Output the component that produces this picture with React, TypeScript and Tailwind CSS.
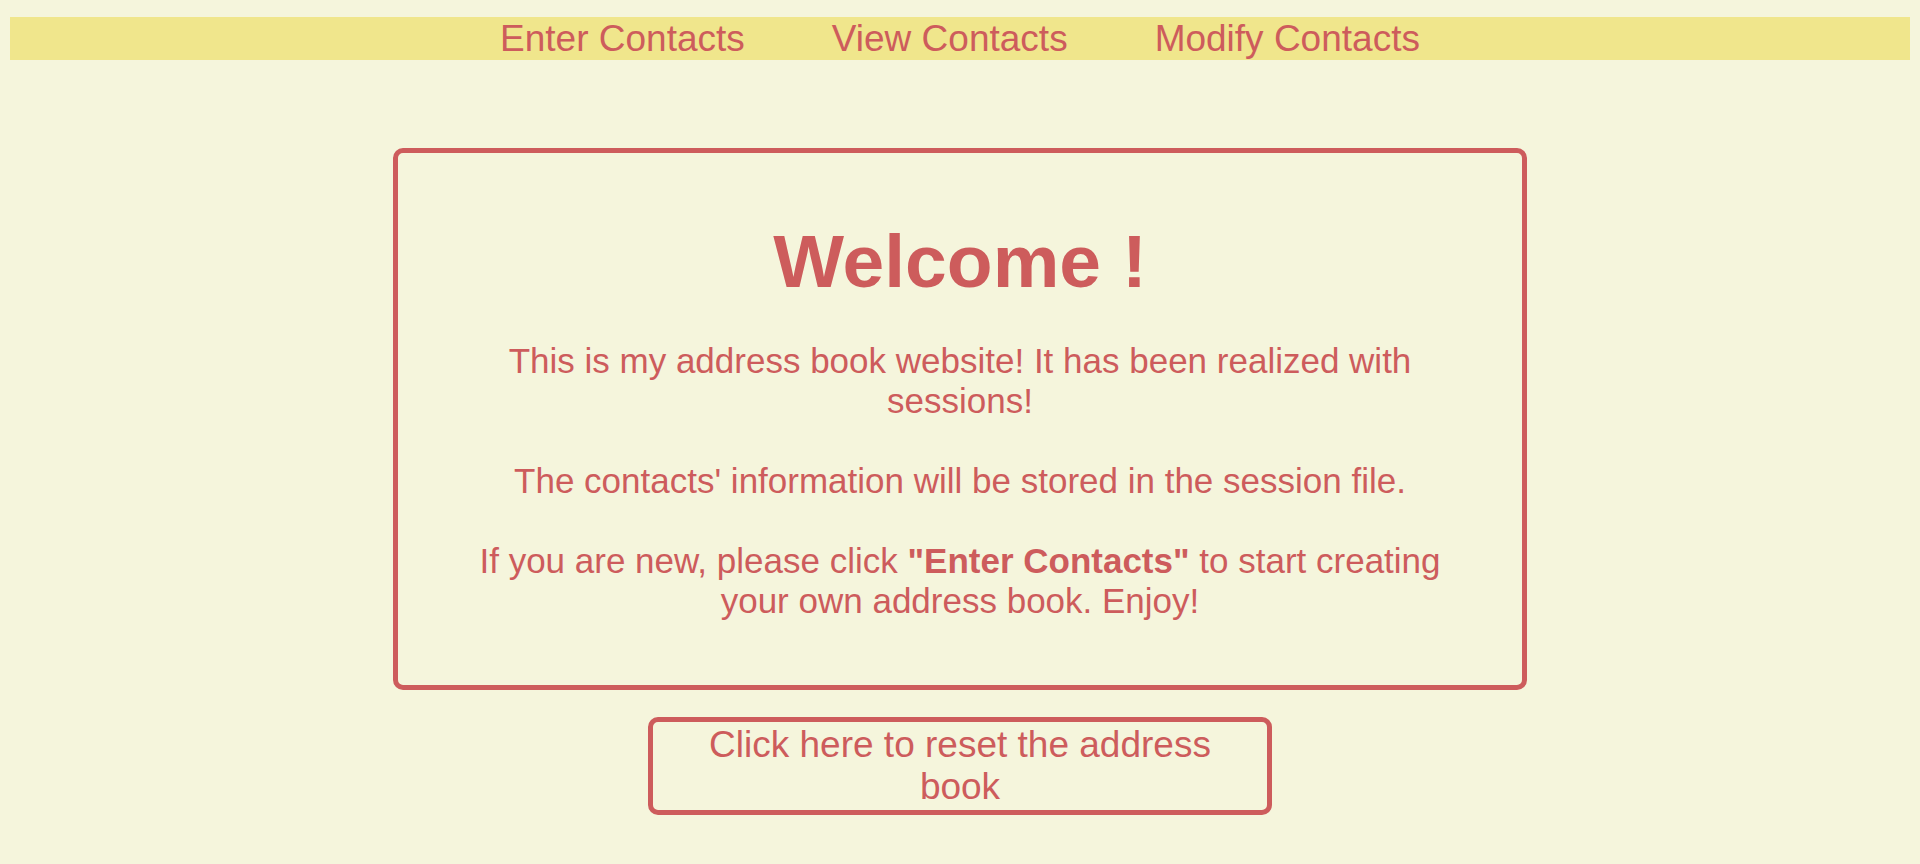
import React from 'react';

const links = ['Enter Contacts', 'View Contacts', 'Modify Contacts'];

export default function App() {
  return (
    <div className="min-h-screen bg-[#f5f5dc] px-[10px] pt-[17px] text-[#cd5c5c] font-['Liberation_Sans',Arial,sans-serif]">
      <nav className="flex h-[43px] items-center justify-center gap-[87px] bg-[#f0e68c]">
        {links.map((link) => (
          <a key={link} href="#" className="text-[37px] leading-[43px]">
            {link}
          </a>
        ))}
      </nav>

      <main className="flex flex-col items-center">
        <section className="mt-[88px] w-[1134px] rounded-[10px] border-[5px] border-[#cd5c5c] px-[62px] pt-[65px] pb-[64px] text-center">
          <h1 className="text-[75px] font-bold leading-[86px]">Welcome !</h1>
          <p className="mt-[37px] text-[35px] leading-[40px]">
            This is my address book website! It has been realized with sessions!
            <br />
            <br />
            The contacts' information will be stored in the session file.
            <br />
            <br />
            If you are new, please click <b>"Enter Contacts"</b> to start creating your own address book. Enjoy!
          </p>
        </section>

        <button className="mt-[27px] w-[624px] rounded-[10px] border-[5px] border-[#cd5c5c] px-[20px] py-[2px] text-[37px] leading-[42px]">
          Click here to reset the address book
        </button>
      </main>
    </div>
  );
}
